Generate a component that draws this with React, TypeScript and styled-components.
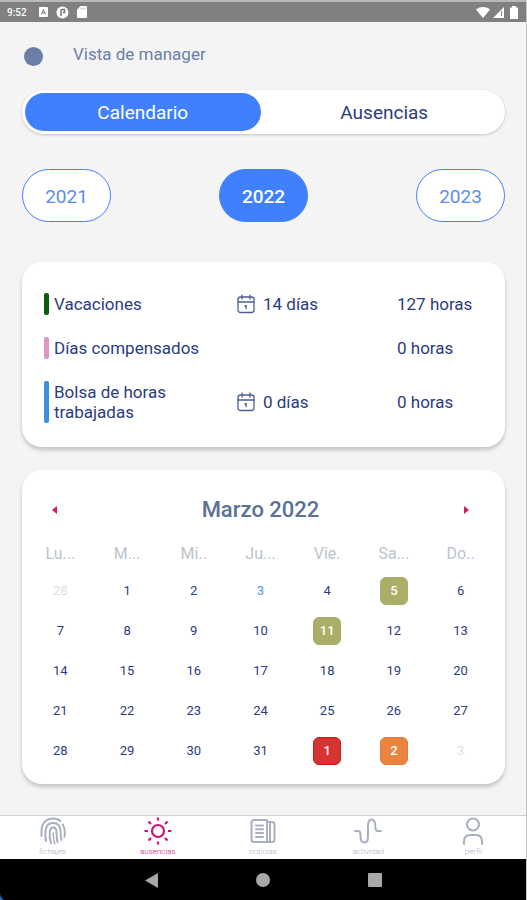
import React from "react";
import styled, { createGlobalStyle } from "styled-components";

const navy = "#2b3c7e";
const slate = "#6b7fa6";
const blue = "#4080ff";
const magenta = "#d0107c";

const GlobalStyle = createGlobalStyle`
  *, *::before, *::after { box-sizing: border-box; }
  body { margin: 0; background: #f4f4f4; font-family: Roboto, "Liberation Sans", sans-serif; color: ${navy}; }
  button { font: inherit; color: inherit; border: 0; padding: 0; background: none; cursor: pointer; }
  svg { display: block; }
`;

const Screen = styled.div`
  min-height: 100vh;
  display: flex;
  flex-direction: column;
  background: #f4f4f4;
  border-right: 1px solid #c4c4c4;
`;

const StatusBar = styled.header`
  height: 22px;
  flex: none;
  display: flex;
  align-items: center;
  justify-content: space-between;
  padding: 0 6px 0 7px;
  border-top: 2px solid #b8b8b8;
  background: #808080;
  color: #fff;
  font-size: 10px;
  font-weight: 500;
`;

const StatusGroup = styled.div<{ $gap: number }>`
  display: flex;
  align-items: center;
  gap: ${(p) => p.$gap}px;
`;

const Clock = styled.time`
  margin-right: 4px;
`;

const Main = styled.main`
  flex: 1;
  display: flex;
  flex-direction: column;
  padding: 22px 21px 31px 22px;
`;

const ManagerButton = styled.button`
  align-self: flex-start;
  display: flex;
  align-items: flex-end;
  gap: 30px;
  height: 22px;
  padding-left: 2px;
  color: ${slate};
  font-size: 17px;
  line-height: 20px;
`;

const ManagerLabel = styled.span`
  align-self: flex-start;
`;

const Dot = styled.span`
  width: 19px;
  height: 19px;
  border-radius: 50%;
  background: ${slate};
`;

const Segmented = styled.div`
  display: flex;
  margin-top: 24px;
  height: 44px;
  padding: 3px;
  border-radius: 22px;
  background: #fff;
  box-shadow: 0 1px 3px rgba(0, 0, 0, 0.2);
`;

const Segment = styled.button<{ $active?: boolean }>`
  flex: 1 1 0;
  padding-left: ${(p) => (p.$active ? 0 : 6)}px;
  padding-top: 2px;
  border-radius: 19px;
  font-size: 19px;
  line-height: 24px;
  background: ${(p) => (p.$active ? blue : "transparent")};
  color: ${(p) => (p.$active ? "#fff" : navy)};
`;

const Years = styled.div`
  display: flex;
  justify-content: space-between;
  margin-top: 35px;
`;

const YearButton = styled.button<{ $active?: boolean }>`
  width: 89px;
  height: 53px;
  padding-top: 2px;
  border-radius: 27px;
  border: 1px solid ${blue};
  font-size: 19px;
  line-height: 24px;
  font-weight: ${(p) => (p.$active ? 500 : 400)};
  background: ${(p) => (p.$active ? blue : "#fff")};
  color: ${(p) => (p.$active ? "#fff" : "#5c8cf0")};
`;

const Card = styled.section`
  border-radius: 20px;
  background: #fff;
  box-shadow: 0 3px 4px rgba(0, 0, 0, 0.2);
`;

const Balances = styled(Card)`
  display: grid;
  gap: 22px;
  margin-top: 40px;
  padding: 31px 22px 24px;
`;

const BalanceRow = styled.div`
  display: grid;
  grid-template-columns: 193fr 160fr 86fr;
  align-items: center;
  font-size: 17px;
  line-height: 20px;
`;

const Kind = styled.div<{ $color: string }>`
  position: relative;
  padding: 1px 24px 1px 10px;

  &::before {
    content: "";
    position: absolute;
    inset: 0 auto 0 0;
    width: 5px;
    border-radius: 2px;
    background: ${(p) => p.$color};
  }
`;

const KindName = styled.span`
  display: block;
  max-width: 152px;
`;

const Days = styled.div`
  display: flex;
  align-items: center;
  gap: 8px;
`;

const CalendarCard = styled(Card)`
  margin-top: 23px;
  padding: 14px 11px 13px 5px;
`;

const MonthBar = styled.div`
  display: flex;
  align-items: center;
  justify-content: space-between;
  height: 52px;
  padding: 0 16px;
`;

const ArrowButton = styled.button`
  display: grid;
  place-items: center;
  width: 22px;
  height: 24px;
`;

const Month = styled.h2`
  margin: 0;
  font-size: 22px;
  line-height: 26px;
  font-weight: 500;
  color: #5a7199;
`;

const Grid = styled.table`
  width: 100%;
  table-layout: fixed;
  border-collapse: collapse;
  text-align: center;
`;

const Weekday = styled.th`
  height: 35px;
  padding: 0;
  font-size: 16px;
  font-weight: 400;
  color: #bcc3cc;
`;

const DayCell = styled.td`
  height: 40px;
  padding: 0;
`;

const DayButton = styled.button<{ $tone?: Tone }>`
  width: 28px;
  height: 28px;
  border-radius: 6px;
  font-size: 13px;
  line-height: 16px;
  font-weight: ${(p) => (p.$tone && tones[p.$tone].fill ? 500 : 400)};
  background: ${(p) => (p.$tone ? tones[p.$tone].fill ?? "transparent" : "transparent")};
  border: 1px solid ${(p) => (p.$tone ? tones[p.$tone].edge ?? "transparent" : "transparent")};
  color: ${(p) => (p.$tone ? tones[p.$tone].text : navy)};
`;

const TabBar = styled.nav`
  flex: none;
  display: flex;
  height: 44px;
  border-top: 1px solid #d0d0d0;
  background: #fff;
`;

const Tab = styled.button<{ $active?: boolean }>`
  flex: 1;
  display: flex;
  flex-direction: column;
  align-items: center;
  padding-top: 1px;
  gap: 1px;
  font-size: 8px;
  font-weight: 300;
  line-height: 12px;
  color: ${(p) => (p.$active ? magenta : "#a9afc2")};
`;

const SystemBar = styled.footer`
  flex: none;
  background: #2a62b4;
`;

const SystemKeys = styled.div`
  display: flex;
  justify-content: center;
  align-items: center;
  gap: 92px;
  height: 42px;
  background: #000;
  border-bottom-left-radius: 8px;
`;

const SystemKey = styled.button`
  width: 20px;
  height: 20px;
  display: grid;
  place-items: center;
`;

type Tone = "muted" | "today" | "olive" | "red" | "orange";

const tones: Record<Tone, { text: string; fill?: string; edge?: string }> = {
  muted: { text: "#dcdfe3" },
  today: { text: "#4a9af0" },
  olive: { text: "#fff", fill: "#abae68", edge: "#abae68" },
  red: { text: "#fff", fill: "#d63333", edge: "#c01c14" },
  orange: { text: "#fff", fill: "#e98440", edge: "#e67a30" },
};

const CalendarIcon = () => (
  <svg width="18" height="20" viewBox="0 0 18 20" fill="none" stroke="#4c5f92" strokeWidth="1.3" strokeLinecap="round">
    <rect x="1" y="3" width="16" height="15.5" rx="2.5" />
    <path d="M1 8h16M5 1v4M13 1v4M9 11.5v3.2" />
    <path d="M8 12h1" />
  </svg>
);

const stroke = {
  width: 28,
  height: 28,
  viewBox: "0 0 28 28",
  fill: "none",
  stroke: "currentColor",
  strokeWidth: 2,
  strokeLinecap: "round" as const,
  strokeLinejoin: "round" as const,
};

const FingerprintIcon = () => (
  <svg {...stroke}>
    <path d="M2.500 19v-5C2.500 6.500 7 1.500 14 1.500c3 0 5.500.9 7.300 2.600" />
    <path d="M23.800 7.500c2 4 2.700 8 1.500 12.500" />
    <path d="M7 24c-.7-3-.8-6.500-.5-10C7 9 9.800 6 14 6c4.500 0 7.300 3 7.500 8 .1 3.500.3 6 1 9" />
    <path d="M12 26c-1.200-3.500-1.500-8-1.200-11 .3-3 1.400-4.500 3.400-4.500s3.200 1.500 3.300 4.500c.1 4 .2 7 1 10" />
    <path d="M14.200 16c0 4 .3 7.500 1.500 10.800" strokeWidth="1.500" />
  </svg>
);

const SunIcon = () => (
  <svg {...stroke} strokeWidth={2.2} strokeLinecap="butt">
    <circle cx="14" cy="14" r="6" />
    <path d="M14 .5v3M14 24.500v3M.5 14h3.500M24 14h3.500M4.500 4.500l2.500 2.500M21 21l2.500 2.500M4.500 23.500L7 21M21 7l2.500-2.500" />
  </svg>
);

const NewsIcon = () => (
  <svg {...stroke}>
    <path d="M5 3h13v22H5a2.500 2.500 0 0 1-2.500-2.500v-17A2.500 2.500 0 0 1 5 3z" />
    <path d="M18 5h5a2.500 2.500 0 0 1 2.500 2.500v15A2.500 2.500 0 0 1 23 25h-5M21 6v18" />
    <path d="M7 8.500h7M7 12.300h7M7 16.100h7M7 20h7" />
  </svg>
);

const ActivityIcon = () => (
  <svg {...stroke}>
    <path d="M1 14h3c2 0 2.500 1 2.500 4 0 5 .5 7.500 4 7.500 3.300 0 3.500-3 3.500-7.500V9c0-4.500.8-6.500 3.500-6.500S21.300 4.500 21.300 9c0 3.500.3 5 2.500 5H27" />
  </svg>
);

const ProfileIcon = () => (
  <svg {...stroke}>
    <circle cx="14" cy="7.500" r="6" />
    <path d="M5 27v-2.500c0-4.500 2.500-6.500 6-6.500h6c3.500 0 6 2 6 6.500V27" />
  </svg>
);

const balances = [
  { name: "Vacaciones", color: "#0c5c10", days: "14 días", hours: "127 horas" },
  { name: "Días compensados", color: "#df98c5", days: null, hours: "0 horas" },
  { name: "Bolsa de horas trabajadas", color: "#3b8ee0", days: "0 días", hours: "0 horas" },
];

const weekdays = ["Lu...", "M...", "Mi..", "Ju...", "Vie.", "Sa...", "Do.."];

const weeks: { day: number; tone?: Tone }[][] = [
  [{ day: 28, tone: "muted" }, { day: 1 }, { day: 2 }, { day: 3, tone: "today" }, { day: 4 }, { day: 5, tone: "olive" }, { day: 6 }],
  [{ day: 7 }, { day: 8 }, { day: 9 }, { day: 10 }, { day: 11, tone: "olive" }, { day: 12 }, { day: 13 }],
  [14, 15, 16, 17, 18, 19, 20].map((day) => ({ day })),
  [21, 22, 23, 24, 25, 26, 27].map((day) => ({ day })),
  [{ day: 28 }, { day: 29 }, { day: 30 }, { day: 31 }, { day: 1, tone: "red" }, { day: 2, tone: "orange" }, { day: 3, tone: "muted" }],
];

const tabs = [
  { label: "fichajes", Icon: FingerprintIcon },
  { label: "ausencias", Icon: SunIcon, active: true },
  { label: "noticias", Icon: NewsIcon },
  { label: "actividad", Icon: ActivityIcon },
  { label: "perfil", Icon: ProfileIcon },
];

export default function App() {
  return (
    <>
      <GlobalStyle />
      <Screen>
        <StatusBar>
          <StatusGroup $gap={8}>
            <Clock>9:52</Clock>
            <svg width="9" height="10" viewBox="0 0 9 10">
              <rect width="9" height="10" rx="1" fill="#fff" />
              <path d="M2.500 7.500L4.500 2.500l2 5M3.200 6h2.600" fill="none" stroke="#777" />
            </svg>
            <svg width="13" height="13" viewBox="0 0 13 13">
              <circle cx="6.500" cy="6.500" r="6" fill="#fff" />
              <path d="M5 10V3.500M5 3.500h3.500v3H7" fill="none" stroke="#777" strokeWidth="1.500" />
            </svg>
            <svg width="10" height="12" viewBox="0 0 10 12">
              <path d="M3.500 0H9a1 1 0 0 1 1 1v10a1 1 0 0 1-1 1H1a1 1 0 0 1-1-1V3.500z" fill="#fff" />
              <path d="M4 1.500v2M6 1.500v2M8 1.500v2" stroke="#aaa" strokeWidth=".8" />
            </svg>
          </StatusGroup>
          <StatusGroup $gap={3}>
            <svg width="14" height="12" viewBox="0 0 14 12">
              <path d="M0 3.500C4 .2 10 .2 14 3.500L7 12z" fill="#fff" />
            </svg>
            <svg width="12" height="12" viewBox="0 0 12 12">
              <path d="M0 12L11 1v11z" fill="#fff" />
              <path d="M8.500 5v5" stroke="#888" />
            </svg>
            <svg width="12" height="13" viewBox="0 0 12 13">
              <path d="M4 0h4v1.500h2V13H2V1.500h2z" fill="#fff" />
            </svg>
          </StatusGroup>
        </StatusBar>

        <Main>
          <ManagerButton type="button">
            <Dot />
            <ManagerLabel>Vista de manager</ManagerLabel>
          </ManagerButton>

          <Segmented>
            <Segment type="button" $active aria-pressed="true">Calendario</Segment>
            <Segment type="button" aria-pressed="false">Ausencias</Segment>
          </Segmented>

          <Years>
            {[2021, 2022, 2023].map((year) => (
              <YearButton key={year} type="button" $active={year === 2022} aria-pressed={year === 2022}>
                {year}
              </YearButton>
            ))}
          </Years>

          <Balances>
            {balances.map((b) => (
              <BalanceRow key={b.name}>
                <Kind $color={b.color}>
                  <KindName>{b.name}</KindName>
                </Kind>
                <Days>
                  {b.days && (
                    <>
                      <CalendarIcon />
                      {b.days}
                    </>
                  )}
                </Days>
                <span>{b.hours}</span>
              </BalanceRow>
            ))}
          </Balances>

          <CalendarCard>
            <MonthBar>
              <ArrowButton type="button" aria-label="Mes anterior">
                <svg width="5" height="8" viewBox="0 0 5 8"><path d="M5 0v8L0 4z" fill="#d81b60" /></svg>
              </ArrowButton>
              <Month>Marzo 2022</Month>
              <ArrowButton type="button" aria-label="Mes siguiente">
                <svg width="5" height="8" viewBox="0 0 5 8"><path d="M0 0v8l5-4z" fill="#d81b60" /></svg>
              </ArrowButton>
            </MonthBar>
            <Grid>
              <thead>
                <tr>
                  {weekdays.map((w) => (
                    <Weekday key={w} scope="col">{w}</Weekday>
                  ))}
                </tr>
              </thead>
              <tbody>
                {weeks.map((week, i) => (
                  <tr key={i}>
                    {week.map(({ day, tone }) => (
                      <DayCell key={day}>
                        <DayButton type="button" $tone={tone}>{day}</DayButton>
                      </DayCell>
                    ))}
                  </tr>
                ))}
              </tbody>
            </Grid>
          </CalendarCard>
        </Main>

        <TabBar>
          {tabs.map(({ label, Icon, active }) => (
            <Tab key={label} type="button" $active={active} aria-current={active ? "page" : undefined}>
              <Icon />
              {label}
            </Tab>
          ))}
        </TabBar>
        <SystemBar>
          <SystemKeys>
            <SystemKey type="button" aria-label="Atrás">
              <svg width="13" height="15" viewBox="0 0 13 15"><path d="M13 0v15L0 7.500z" fill="#a8a8a8" /></svg>
            </SystemKey>
            <SystemKey type="button" aria-label="Inicio">
              <svg width="14" height="14" viewBox="0 0 14 14"><circle cx="7" cy="7" r="7" fill="#a8a8a8" /></svg>
            </SystemKey>
            <SystemKey type="button" aria-label="Recientes">
              <svg width="14" height="14" viewBox="0 0 14 14"><rect width="14" height="14" rx="1" fill="#a8a8a8" /></svg>
            </SystemKey>
          </SystemKeys>
        </SystemBar>
      </Screen>
    </>
  );
}
